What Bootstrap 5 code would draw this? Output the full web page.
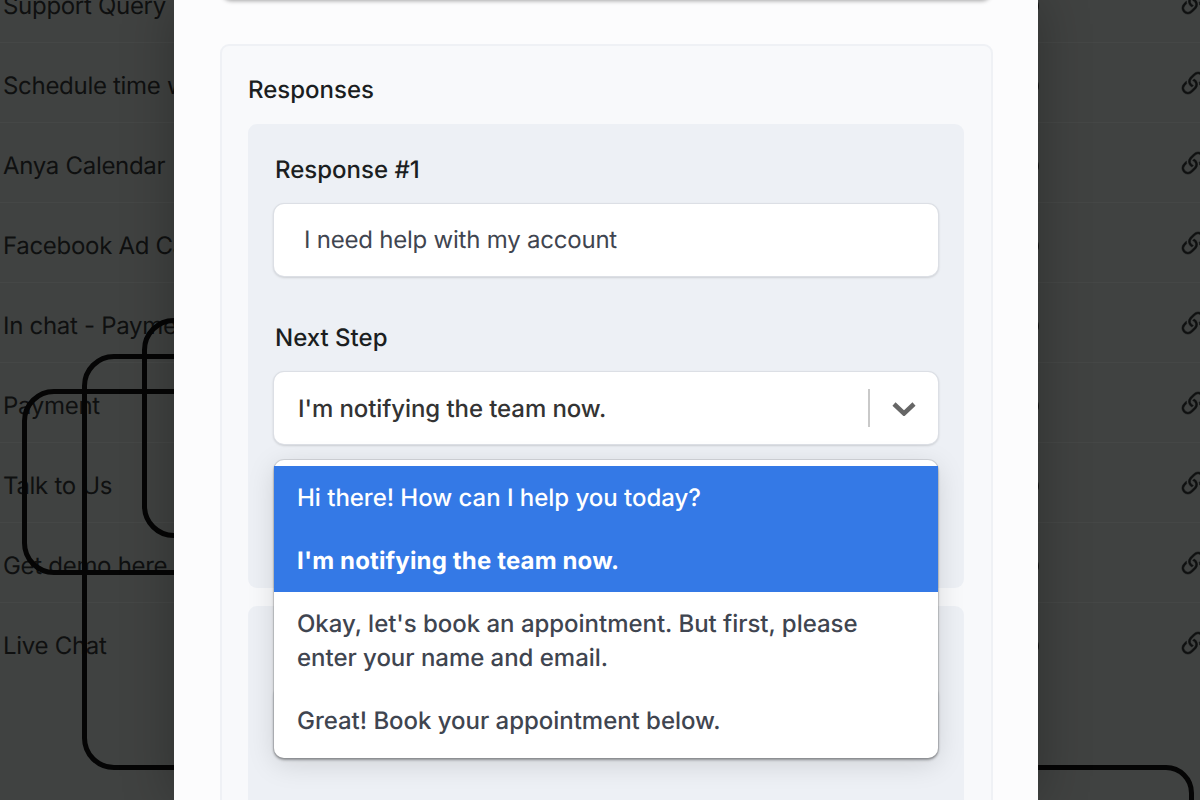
<!DOCTYPE html>
<html lang="en">
<head>
<meta charset="utf-8">
<title>Responses</title>
<link href="https://cdn.jsdelivr.net/npm/bootstrap@5.3.0/dist/css/bootstrap.min.css" rel="stylesheet">
<style>
html,body{height:800px;overflow:hidden}
body{background:#404241;font-family:Inter,"Liberation Sans",sans-serif;font-size:24px;color:#1b1e21;position:relative;text-rendering:geometricPrecision}
.back-list{margin-top:-37px;--bs-list-group-bg:transparent;--bs-list-group-border-color:#454746;--bs-list-group-color:#0f1010}
.back-row{height:80px;padding:6px 0 0 3px;border-width:0 0 1px 0;border-style:solid;display:flex;align-items:center;background:transparent;line-height:34px;color:#0f1010;letter-spacing:-.3px}
.back-dot{margin-left:auto;width:10px;height:14px;border-radius:50%;background:#111}
.back-link{margin-left:138px;margin-right:-9px;width:32px;height:32px;flex:none;fill:#0f1010;stroke:#0f1010;stroke-width:.25;margin-top:-4px}
.icon-defs{display:none}
.ghost{position:absolute;border:5px solid #050505;border-radius:32px}
.ghost-a{left:142px;top:318px;width:500px;height:220px}
.ghost-b{left:82px;top:354px;width:600px;height:416px}
.ghost-c{left:22px;top:389px;width:500px;height:186px}
.ghost-d{left:900px;top:765px;width:294px;height:100px;border-radius:28px}
.sheet{position:absolute;left:174px;top:0;width:864px;height:800px;overflow:hidden;background:#fcfcfd;padding:0 45px 0 46px;box-shadow:0 0 48px rgba(0,0,0,.28)}
.sheet-top{height:20px;margin:-20px 2px 44px 2px;background:#fff;border-radius:9px;box-shadow:0 1px 4px rgba(0,0,0,.35)}
.resp-outer{background:#f8f9fb;border:2px solid #eff1f5;border-radius:9px;padding:27px 27px 0 26px;height:900px}
.resp-title{font-size:24px;font-weight:500;line-height:34px;margin:0 0 17px 0;color:#1b1e21}
.resp-inner{background:#edf0f5;border-radius:9px;padding:29px 26px 0 26px;margin-bottom:18px;height:464px}
.resp-label{font-size:24px;font-weight:500;line-height:34px;min-height:34px;margin:0 0 17px 1px;color:#1b1e21}
.resp-input{height:72px;background:#fff;border:0;border-radius:10px;box-shadow:0 0 0 1px #dcdfe5,0 1px 3px rgba(0,0,0,.28);padding:0 30px;line-height:72px;color:#3f4550;font-size:24px;margin-bottom:45px;width:100%;letter-spacing:-.22px}
.resp-select{height:72px;background:#fff;border-radius:10px;box-shadow:0 0 0 1px #dcdfe5,0 1px 3px rgba(0,0,0,.28);padding:0 22px 0 24px;color:#333;position:relative}
.sel-text{padding-top:1px;font-weight:500;letter-spacing:-.08px}
.sel-sep{width:2px;height:38px;background:#c9c9c9;margin-left:auto}
.sel-chev{width:24px;height:15px;margin-left:22px;fill:none;stroke:#666;stroke-width:4.5}
.opt-menu{position:absolute;left:0;right:0;top:88px;display:block;margin:0;padding:6px 0;background:#fff;border:0;border-radius:10px;box-shadow:0 0 0 1px rgba(0,0,0,.1),0 2px 3px rgba(0,0,0,.25),0 6px 28px rgba(0,0,0,.13);min-width:0;z-index:5;font-size:24px}
.opt-menu .dropdown-item{padding:14.5px 40px 14.5px 23px;line-height:34px;color:#3f4550;white-space:normal;font-size:24px;font-weight:500;letter-spacing:-.03px}
.opt-menu .opt-blue{background:#3479e6;color:#fff}
.opt-menu .opt-sel{font-weight:700;letter-spacing:.15px;padding-top:15px;padding-bottom:14px}
</style>
</head>
<body>
<svg class="icon-defs"><symbol id="chain" viewBox="0 0 16 16"><path d="M4.715 6.542 3.343 7.914a3 3 0 1 0 4.243 4.243l1.828-1.829A3 3 0 0 0 8.586 5.5L8 6.086a1.002 1.002 0 0 0-.154.199 2 2 0 0 1 .861 3.337L6.88 11.45a2 2 0 1 1-2.83-2.83l.793-.792a4.018 4.018 0 0 1-.128-1.287z"/><path d="M6.586 4.672A3 3 0 0 0 7.414 9.5l.775-.776a2 2 0 0 1-.896-3.346L9.12 3.55a2 2 0 1 1 2.83 2.83l-.793.792c.112.42.155.855.128 1.287l1.372-1.372a3 3 0 1 0-4.243-4.243L6.586 4.672z"/></symbol></svg>
<div class="list-group list-group-flush back-list">
  <div class="list-group-item back-row">Support Query<span class="back-dot"></span><svg class="back-link"><use href="#chain"/></svg></div>
  <div class="list-group-item back-row">Schedule time with us<span class="back-dot"></span><svg class="back-link"><use href="#chain"/></svg></div>
  <div class="list-group-item back-row">Anya Calendar<span class="back-dot"></span><svg class="back-link"><use href="#chain"/></svg></div>
  <div class="list-group-item back-row">Facebook Ad Campaign<span class="back-dot"></span><svg class="back-link"><use href="#chain"/></svg></div>
  <div class="list-group-item back-row">In chat - Payment<span class="back-dot"></span><svg class="back-link"><use href="#chain"/></svg></div>
  <div class="list-group-item back-row">Payment<span class="back-dot"></span><svg class="back-link"><use href="#chain"/></svg></div>
  <div class="list-group-item back-row">Talk to Us<span class="back-dot"></span><svg class="back-link"><use href="#chain"/></svg></div>
  <div class="list-group-item back-row">Get demo here<span class="back-dot"></span><svg class="back-link"><use href="#chain"/></svg></div>
  <div class="list-group-item back-row">Live Chat<span class="back-dot"></span><svg class="back-link"><use href="#chain"/></svg></div>
</div>

<div class="ghost ghost-a"></div>
<div class="ghost ghost-b"></div>
<div class="ghost ghost-c"></div>
<div class="ghost ghost-d"></div>

<div class="sheet">
  <div class="sheet-top"></div>
  <div class="resp-outer">
    <div class="resp-title">Responses</div>
    <div class="resp-inner">
      <div class="resp-label">Response #1</div>
      <div class="resp-input">I need help with my account</div>
      <div class="resp-label">Next Step</div>
      <div class="resp-select d-flex align-items-center">
        <span class="sel-text">I'm notifying the team now.</span>
        <span class="sel-sep"></span>
        <svg class="sel-chev" viewBox="0 0 24 15"><path d="M2 3l10 9.5L22 3"/></svg>
        <div class="dropdown-menu opt-menu">
          <div class="dropdown-item opt-blue">Hi there! How can I help you today?</div>
          <div class="dropdown-item opt-blue opt-sel">I'm notifying the team now.</div>
          <div class="dropdown-item">Okay, let's book an appointment. But first, please enter your name and email.</div>
          <div class="dropdown-item">Great! Book your appointment below.</div>
        </div>
      </div>
    </div>
    <div class="resp-inner">
      <div class="resp-label"></div>
      <div class="resp-input"></div>
    </div>
  </div>
</div>
<script src="https://cdn.jsdelivr.net/npm/bootstrap@5.3.0/dist/js/bootstrap.bundle.min.js"></script>
</body>
</html>
